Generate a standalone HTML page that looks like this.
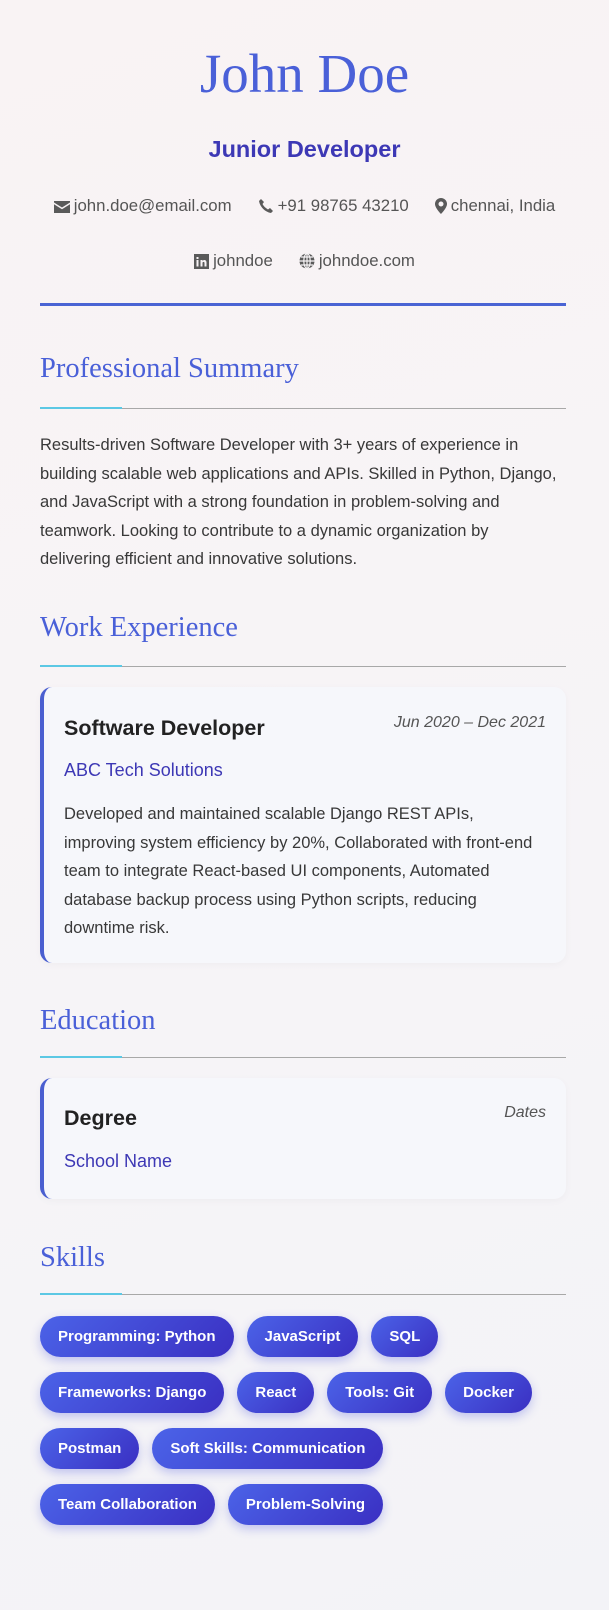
<!DOCTYPE html>
<html><head><meta charset="utf-8"><style>
*{margin:0;padding:0;box-sizing:border-box}
body{width:609px;height:1610px;background:linear-gradient(160deg,#f9f3f4,#f6f4f7 60%,#f3f3f7);font-family:"Liberation Sans","DejaVu Sans",sans-serif;position:relative;overflow:hidden;color:#333}
.a{position:absolute}
.c{left:0;width:609px;text-align:center}
h1{font-family:"Liberation Serif",serif;font-weight:400;font-size:55px;color:#4a60d8;line-height:1}
.title{font-weight:700;font-size:23.5px;color:#3d38b5}
.ct{font-size:16.8px;color:#555;display:flex;justify-content:center;gap:26px;align-items:center}
.ct span{display:flex;align-items:center;gap:4px}
.ct svg{fill:#5a5a5a}
.hr{left:40px;width:526px;height:3px;background:#4a64d4}
.sh{left:40px;font-family:"Liberation Serif",serif;font-size:28.5px;color:#4a60d8;line-height:1}
.ul{left:40px;width:526px;height:1px;background:#a8a8a8}
.ul:before{content:"";position:absolute;left:0;top:-1px;width:82px;height:2px;background:#5cc8e4}
.p{left:40px;width:540px;font-size:16.5px;line-height:28.5px;color:#383838;white-space:nowrap}
.card{left:40px;width:526px;background:#f6f7fb;border-left:4px solid #4a5fd0;border-radius:12px;box-shadow:0 2px 8px rgba(0,0,0,.03)}
.card .t{position:absolute;left:20px;font-weight:700;font-size:21.5px;color:#222}
.card .d{position:absolute;right:20px;font-style:italic;font-size:16px;color:#555}
.card .co{position:absolute;left:20px;font-size:18px;color:#3d38b5}
.card .tx{position:absolute;left:20px;width:500px;font-size:16.5px;line-height:28.5px;color:#383838;white-space:nowrap}
.sk{left:40px;width:526px;display:flex;flex-wrap:wrap;gap:15px 13px}
.sk span{height:41px;line-height:41px;padding:0 18px;border-radius:21px;background:linear-gradient(135deg,#4b63e8,#3a2fc2);color:#fff;font-weight:700;font-size:15px;box-shadow:0 4px 10px rgba(70,80,220,.3)}
</style></head><body>
<h1 class="a c" style="top:46px">John Doe</h1>
<div class="a c title" style="top:136px">Junior Developer</div>
<div class="a c ct" style="top:196px">
<span><svg width="16" height="13" viewBox="0 0 16 13"><path d="M0 1h16v1.5L8 7.5 0 2.5z M0 4.2l8 5 8-5V13H0z"/></svg>john.doe@email.com</span>
<span><svg width="16" height="16" viewBox="0 0 16 16"><path d="M3 1l3 3-1.5 2c1 2 3 4 5.5 5.5l2-1.5 3 3-2 2C7 14 2 9 1 3z"/></svg>+91 98765 43210</span>
<span><svg width="12" height="16" viewBox="0 0 12 16"><path d="M6 0a6 6 0 0 1 6 6c0 4-6 10-6 10S0 10 0 6a6 6 0 0 1 6-6zm0 3.5a2.5 2.5 0 1 0 0 5 2.5 2.5 0 0 0 0-5z"/></svg>chennai, India</span>
</div>
<div class="a c ct" style="top:251px">
<span><svg width="15" height="15" viewBox="0 0 15 15"><path d="M0 0h15v15H0zM2.5 6v6.5h2V6zm0-3v2h2V3zm4 3v6.5h2V9c0-1.5 2-1.5 2 0v3.5h2V8.5c0-3-3-3-4-1.5V6z"/></svg>johndoe</span>
<span><svg width="16" height="16" viewBox="0 0 16 16"><circle cx="8" cy="8" r="7.5"/><path d="M0.5 8h15M8 .5v15M2 4h12M2 12h12" stroke="#f7f4f6" stroke-width="1.2" fill="none"/><ellipse cx="8" cy="8" rx="3.2" ry="7.5" stroke="#f7f4f6" stroke-width="1.2" fill="none"/></svg>johndoe.com</span>
</div>
<div class="a hr" style="top:303px"></div>

<div class="a sh" style="top:355px">Professional Summary</div>
<div class="a ul" style="top:408px"></div>
<div class="a p" style="top:431px">Results-driven Software Developer with 3+ years of experience in<br>building scalable web applications and APIs. Skilled in Python, Django,<br>and JavaScript with a strong foundation in problem-solving and<br>teamwork. Looking to contribute to a dynamic organization by<br>delivering efficient and innovative solutions.</div>

<div class="a sh" style="top:614px">Work Experience</div>
<div class="a ul" style="top:666px"></div>
<div class="a card" style="top:687px;height:276px">
<div class="t" style="top:29px">Software Developer</div>
<div class="d" style="top:27px">Jun 2020 – Dec 2021</div>
<div class="co" style="top:73px">ABC Tech Solutions</div>
<div class="tx" style="top:113px">Developed and maintained scalable Django REST APIs,<br>improving system efficiency by 20%, Collaborated with front-end<br>team to integrate React-based UI components, Automated<br>database backup process using Python scripts, reducing<br>downtime risk.</div>
</div>

<div class="a sh" style="top:1007px">Education</div>
<div class="a ul" style="top:1057px"></div>
<div class="a card" style="top:1078px;height:121px">
<div class="t" style="top:28px">Degree</div>
<div class="d" style="top:26px">Dates</div>
<div class="co" style="top:73px">School Name</div>
</div>

<div class="a sh" style="top:1244px">Skills</div>
<div class="a ul" style="top:1294px"></div>
<div class="a sk" style="top:1316px">
<span>Programming: Python</span><span>JavaScript</span><span>SQL</span>
<span>Frameworks: Django</span><span>React</span><span>Tools: Git</span><span>Docker</span>
<span>Postman</span><span>Soft Skills: Communication</span>
<span>Team Collaboration</span><span>Problem-Solving</span>
</div>
</body></html>
